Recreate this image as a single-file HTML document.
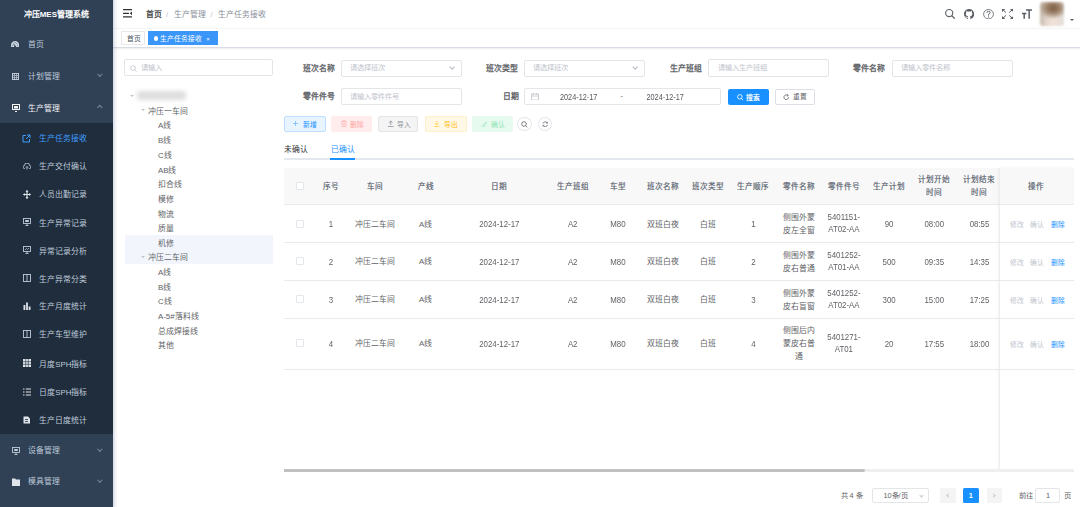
<!DOCTYPE html>
<html lang="zh-CN"><head><meta charset="utf-8">
<style>
*{box-sizing:border-box;margin:0;padding:0}
html,body{width:1080px;height:507px;overflow:hidden;background:#fff;font-family:"Liberation Sans",sans-serif;color:#606266}
.a{position:absolute}
#side{left:0;top:0;width:112.6px;height:507px;background:#304156}
#sub{left:0;top:123px;width:112.6px;height:310.8px;background:#1f2d3d}
.logo{left:0;top:9px;width:112.6px;text-align:center;color:#fff;font-weight:bold;font-size:8px;line-height:12px}
.mi{margin-top:0.6px;left:28.4px;font-size:7.875px;line-height:10px;color:#bfcbd9;white-space:nowrap}
.si{margin-top:0.9px;left:39.3px;font-size:7.875px;line-height:10px;color:#bfcbd9;white-space:nowrap}
.ic{position:absolute}
.chev{position:absolute;width:3.6px;height:3.6px;border-right:0.8px solid #7b8797;border-bottom:0.8px solid #7b8797}
#nav{left:112.6px;top:0;width:967.4px;height:28.1px;background:#fff;box-shadow:0 0.6px 1.5px rgba(0,21,41,.12)}
.bc{top:9.8px;font-size:7.875px;line-height:10px;color:#878e99;white-space:nowrap}
#tags{left:112.6px;top:28.6px;width:967.4px;height:19.4px;background:#fff;border-bottom:1px solid #d8dce5;box-shadow:0 1px 2px rgba(0,0,0,.08)}
.tag{top:2.3px;height:14.6px;line-height:13px;font-size:6.75px;border:1px solid #e6e8ec;color:#495060;padding:0 4.5px;white-space:nowrap}
.t7{font-size:7.875px;line-height:10px;white-space:nowrap}
.inp{position:absolute;border:1px solid #e3e5e8;border-radius:2px;background:#fff}
.ph{position:absolute;font-size:7.3px;line-height:10px;color:#c0c4cc;white-space:nowrap}
.lbl{position:absolute;margin-top:0.8px;font-size:7.875px;line-height:10px;color:#55585e;font-weight:normal;-webkit-text-stroke:0.3px #606266;white-space:nowrap}
.bx{position:absolute;top:116.3px;height:15.5px;border:1px solid;border-radius:2px}
.bt{position:absolute;top:119.5px;font-size:6.75px;line-height:10px;white-space:nowrap}
.btn{position:absolute;top:116.2px;height:15.6px;border:1px solid;border-radius:1.7px;font-size:6.75px;line-height:13.6px;text-align:center;white-space:nowrap}
.tree{position:absolute;margin-top:1.1px;font-size:7.875px;line-height:10px;color:#606266;white-space:nowrap}
.th{position:absolute;font-size:7.6px;line-height:12px;color:#515865;font-weight:normal;-webkit-text-stroke:0.15px #5a6172;text-align:center;white-space:nowrap}
.td{position:absolute;font-size:7.875px;line-height:12.4px;color:#606266;text-align:center;white-space:nowrap}
.hl{position:absolute;left:283.7px;width:790px;height:1px;background:#e8eaed}
.cb{position:absolute;width:7.8px;height:7.8px;border:1px solid #e3e6eb;border-radius:1px;background:#fff}
.ln{transform:scaleY(1.14)}
</style></head><body>
<!-- SIDEBAR -->
<div id="side" class="a"></div>
<div id="sub" class="a"></div>
<div class="a logo">冲压MES管理系统</div>
<!-- main menu items -->
<svg class="ic" style="left:10.9px;top:40.7px" width="8.2" height="6.5" viewBox="0 0 8.2 6.5"><path d="M0 6.5V4.2A4.1 4.2 0 0 1 8.2 4.2V6.5Z" fill="#c9d3df"/><path d="M4.1 5.6L2.6 2.6M1.2 4.3H1.9M6.3 4.3H7M4.1 1V1.8M5.9 2.1L5.4 2.6" stroke="#304156" stroke-width="0.8"/><circle cx="4.1" cy="5.5" r="0.9" fill="#304156"/></svg>
<div class="a mi" style="top:39.5px">首页</div>
<svg class="ic" style="left:12px;top:72.5px" width="7" height="7" viewBox="0 0 7 7"><rect x="0.5" y="0.5" width="6" height="6" fill="none" stroke="#bfcbd9" stroke-width="1"/><path d="M0.5 2.5H6.5M0.5 4.5H6.5M2.5 0.5V6.5M4.5 0.5V6.5" stroke="#bfcbd9" stroke-width="0.7"/></svg>
<div class="a mi" style="top:71.5px">计划管理</div>
<div class="chev" style="left:97.5px;top:71.5px;transform:rotate(45deg)"></div>
<svg class="ic" style="left:11.5px;top:103.5px" width="8" height="8" viewBox="0 0 8 8"><rect x="0.5" y="0.5" width="7" height="5" fill="none" stroke="#f4f4f5" stroke-width="1"/><rect x="2" y="2" width="4" height="2.5" fill="#f4f4f5"/><path d="M3 7.5H5" stroke="#f4f4f5"/></svg>
<div class="a mi" style="top:103px;color:#f4f4f5">生产管理</div>
<div class="chev" style="left:97.5px;top:106px;transform:rotate(-135deg)"></div>
<!-- submenu -->
<svg class="ic" style="left:22.2px;top:134px" width="9" height="9" viewBox="0 0 9 9"><path d="M7.5 5V8H1V1.5H4" fill="none" stroke="#409eff" stroke-width="1"/><path d="M5 1H8V4M8 1L4 5" fill="none" stroke="#409eff" stroke-width="1"/></svg>
<div class="a si" style="top:133.2px;color:#409eff">生产任务接收</div>
<svg class="ic" style="left:23px;top:162.5px" width="8" height="7" viewBox="0 0 8 7"><path d="M2 5.5H1.5A1.5 1.5 0 0 1 1.5 2.5 2.5 2.5 0 0 1 6.5 2.5 1.5 1.5 0 0 1 6.5 5.5H6" fill="none" stroke="#bfcbd9" stroke-width="0.9"/><path d="M4 6.5V3.5M3 4.5L4 3.5 5 4.5" fill="none" stroke="#bfcbd9" stroke-width="0.9"/></svg>
<div class="a si" style="top:161.3px">生产交付确认</div>
<svg class="ic" style="left:22.5px;top:190px" width="8" height="9" viewBox="0 0 8 9"><path d="M4 0.5V8.5M0.5 4.5H7.5" stroke="#dfe4ea" stroke-width="1.2"/><path d="M4 0L2.5 1.8H5.5ZM4 9L2.5 7.2H5.5ZM0 4.5L1.8 3V6ZM8 4.5L6.2 3V6Z" fill="#dfe4ea"/></svg>
<div class="a si" style="top:189.5px">人员出勤记录</div>
<svg class="ic" style="left:23px;top:218px" width="8" height="8" viewBox="0 0 8 8"><rect x="0.5" y="0.5" width="7" height="5" fill="none" stroke="#bfcbd9" stroke-width="0.9"/><rect x="2.2" y="2" width="3.6" height="2" fill="#bfcbd9"/><path d="M4 5.5V7.5M2.5 7.5H5.5" stroke="#bfcbd9" stroke-width="0.9"/></svg>
<div class="a si" style="top:217.7px">生产异常记录</div>
<svg class="ic" style="left:23px;top:246px" width="8" height="8" viewBox="0 0 8 8"><rect x="0.5" y="0.5" width="7" height="5" fill="none" stroke="#bfcbd9" stroke-width="0.9"/><path d="M2 4L3.5 2.5 4.5 3.5 6 2" fill="none" stroke="#bfcbd9" stroke-width="0.8"/><path d="M4 5.5V7.5M2.5 7.5H5.5" stroke="#bfcbd9" stroke-width="0.9"/></svg>
<div class="a si" style="top:245.9px">异常记录分析</div>
<svg class="ic" style="left:23px;top:274px" width="8" height="8" viewBox="0 0 8 8"><rect x="0.5" y="0.5" width="7" height="7" fill="none" stroke="#bfcbd9" stroke-width="0.9"/><path d="M4 0.5V7.5" stroke="#bfcbd9" stroke-width="0.9"/></svg>
<div class="a si" style="top:273.8px">生产异常分类</div>
<svg class="ic" style="left:22.5px;top:302px" width="8" height="8" viewBox="0 0 8 8"><path d="M0.5 8V3H2.3V8ZM3.1 8V0.5H4.9V8ZM5.7 8V4.5H7.5V8Z" fill="#dfe4ea"/></svg>
<div class="a si" style="top:301.5px">生产月度统计</div>
<svg class="ic" style="left:23px;top:330px" width="8" height="8" viewBox="0 0 8 8"><rect x="0.5" y="0.5" width="7" height="7" fill="none" stroke="#bfcbd9" stroke-width="0.9"/><path d="M4 0.5V7.5" stroke="#bfcbd9" stroke-width="0.9"/></svg>
<div class="a si" style="top:329.6px">生产车型维护</div>
<svg class="ic" style="left:22.5px;top:359.3px" width="8" height="8" viewBox="0 0 8 8"><rect x="0" y="0" width="8" height="8" fill="#dfe4ea"/><path d="M0 2.7H8M0 5.3H8M2.7 0V8M5.3 0V8" stroke="#1f2d3d" stroke-width="0.6"/></svg>
<div class="a si" style="top:358.8px">月度SPH指标</div>
<svg class="ic" style="left:22.5px;top:387.5px" width="8" height="8" viewBox="0 0 8 8"><path d="M0 1H1.5M0 4H1.5M0 7H1.5M2.8 1H8M2.8 4H8M2.8 7H8" stroke="#dfe4ea" stroke-width="1.1"/></svg>
<div class="a si" style="top:387.4px">日度SPH指标</div>
<svg class="ic" style="left:22.5px;top:416px" width="8" height="8" viewBox="0 0 8 8"><path d="M0.5 0.5H5L7 2.5V7.5H0.5Z" fill="#dfe4ea"/><path d="M2 3.5H5M2 5.5H5" stroke="#1f2d3d" stroke-width="0.8"/></svg>
<div class="a si" style="top:415.5px">生产日度统计</div>
<svg class="ic" style="left:11.6px;top:447px" width="8" height="8" viewBox="0 0 8 8"><rect x="0.5" y="0.5" width="7" height="5" fill="none" stroke="#bfcbd9" stroke-width="0.9"/><rect x="2.2" y="2" width="3.6" height="2" fill="#bfcbd9"/><path d="M4 5.5V7.5M2.5 7.5H5.5" stroke="#bfcbd9" stroke-width="0.9"/></svg>
<div class="a mi" style="top:445.6px">设备管理</div>
<div class="chev" style="left:97.5px;top:446.5px;transform:rotate(45deg)"></div>
<svg class="ic" style="left:11.6px;top:478px" width="8" height="8" viewBox="0 0 8 8"><path d="M0 0.5H3L4 1.5H8V8H0Z" fill="#dfe4ea"/></svg>
<div class="a mi" style="top:476.9px">模具管理</div>
<div class="chev" style="left:97.5px;top:478px;transform:rotate(45deg)"></div>

<!-- NAVBAR -->
<div id="nav" class="a"></div>
<svg class="ic" style="left:122.7px;top:9.2px" width="9.2" height="8.6" viewBox="0 0 9.2 8.6"><path d="M0 0.7H9.2M0 4.3H6M0 7.9H9.2" stroke="#333" stroke-width="1.2"/><path d="M9.2 2.3V6.3L6.8 4.3Z" fill="#333"/></svg>
<div class="a bc" style="left:146.3px;color:#3a3c40;-webkit-text-stroke:0.25px #3a3c40">首页</div>
<div class="a bc" style="left:166px;color:#c0c4cc">/</div>
<div class="a bc" style="left:173.8px">生产管理</div>
<div class="a bc" style="left:210.5px;color:#c0c4cc">/</div>
<div class="a bc" style="left:218px">生产任务接收</div>
<!-- right icons -->
<svg class="ic" style="left:944px;top:8px" width="12" height="12" viewBox="0 0 12 12"><circle cx="5.2" cy="5.1" r="3.6" fill="none" stroke="#5a5e66" stroke-width="1.1"/><path d="M7.8 7.7L10.8 10.6" stroke="#5a5e66" stroke-width="1.3"/></svg>
<svg class="ic" style="left:964px;top:9px" width="10.2" height="10.2" viewBox="0 0 16 16"><path fill="#5a5e66" d="M8 0C3.58 0 0 3.58 0 8c0 3.54 2.29 6.53 5.47 7.59.4.07.55-.17.55-.38 0-.19-.01-.82-.01-1.49-2.01.37-2.530-.49-2.69-.94-.09-.23-.48-.94-.82-1.13-.28-.15-.68-.52-.01-.53.63-.01 1.08.58 1.23.82.72 1.21 1.87.87 2.33.66.07-.52.28-.87.51-1.07-1.780-.2-3.640-.89-3.640-3.95 0-.87.31-1.59.82-2.15-.08-.2-.36-1.02.08-2.12 0 0 .67-.21 2.2.82.64-.18 1.32-.27 2-.27.68 0 1.36.09 2 .27 1.53-1.04 2.2-.82 2.2-.82.44 1.1.16 1.92.08 2.12.51.56.82 1.27.82 2.15 0 3.07-1.87 3.75-3.65 3.95.29.25.54.73.54 1.48 0 1.07-.01 1.93-.01 2.2 0 .21.15.46.55.38A8.013 8.013 0 0016 8c0-4.42-3.58-8-8-8z"/></svg>
<svg class="ic" style="left:983px;top:8.8px" width="11" height="10.4" viewBox="0 0 11 10.4"><ellipse cx="5.5" cy="5.2" rx="4.9" ry="4.7" fill="none" stroke="#5a5e66" stroke-width="0.8"/><path d="M3.9 3.9Q3.9 2.3 5.5 2.3Q7.1 2.3 7.1 3.7Q7.1 4.6 5.6 5.3V6.6" fill="none" stroke="#5a5e66" stroke-width="1"/><circle cx="5.6" cy="7.9" r="0.6" fill="#5a5e66"/></svg>
<svg class="ic" style="left:1002px;top:9px" width="11.2" height="10" viewBox="0 0 11.2 10"><path d="M1.2 1.1L4 3.6M10 1.1L7.2 3.6M1.2 8.9L4 6.4M10 8.9L7.2 6.4" stroke="#5a5e66" stroke-width="1"/><path d="M0 0H3.3L0 3ZM11.2 0H7.9L11.2 3ZM0 10H3.3L0 7ZM11.2 10H7.9L11.2 7Z" fill="#5a5e66"/></svg>
<svg class="ic" style="left:1021.6px;top:9.2px" width="10.3" height="9.8" viewBox="0 0 10.3 9.8"><path d="M4 1H10.3M7.15 1V9.8M0 4.4H4.4M2.2 4.4V9.8" stroke="#5a5e66" stroke-width="1.5"/></svg>
<div class="a" style="left:1039.7px;top:2px;width:24.2px;height:23.5px;border-radius:3px;background:radial-gradient(ellipse 60% 45% at 55% 25%,#7a5c44 0%,#9c8068 45%,rgba(200,185,170,0) 100%),radial-gradient(ellipse 50% 40% at 55% 85%,#f3e3da 0%,rgba(240,225,215,0) 100%),linear-gradient(90deg,#cbbfb3,#e0d6cd 50%,#e4e0dc);filter:blur(1.3px)"></div>
<div class="a" style="left:1069.8px;top:19px;width:0;height:0;border-left:2px solid transparent;border-right:2px solid transparent;border-top:2.5px solid #5a5e66"></div>

<!-- TAGS -->
<div id="tags" class="a"></div>
<div class="a tag" style="left:121px;top:30.5px;width:23.7px">首页</div>
<div class="a tag" style="left:148px;top:30.5px;width:69.5px;background:#3a96f8;border-color:#3a96f8;color:#fff;padding-left:4.5px">
<span style="display:inline-block;width:4.5px;height:4.5px;border-radius:50%;background:#fff;margin-right:2.3px;vertical-align:0px"></span>生产任务接收<span style="margin-left:4px;font-size:6px">×</span></div>

<!-- TREE -->
<div class="inp" style="left:124.3px;top:59.4px;width:148.4px;height:17px"></div>
<svg class="ic" style="left:130px;top:64.5px" width="7" height="7" viewBox="0 0 7 7"><circle cx="3" cy="3" r="2.4" fill="none" stroke="#c0c4cc" stroke-width="0.8"/><path d="M4.8 4.8L6.5 6.5" stroke="#c0c4cc" stroke-width="0.8"/></svg>
<div class="ph" style="left:141px;top:63px">请输入</div>
<div class="a" style="left:124.5px;top:235.3px;width:148.8px;height:28.7px;background:#f2f6fc"></div>
<div class="a" style="left:129.5px;top:94.6px;width:0;height:0;border-left:2px solid transparent;border-right:2px solid transparent;border-top:2.5px solid #c0c4cc"></div>
<div class="a" style="left:136.5px;top:91px;width:49px;height:9px;background:#dedede;border-radius:3px;filter:blur(2px)"></div>
<div class="a" style="left:140.5px;top:109.4px;width:0;height:0;border-left:2px solid transparent;border-right:2px solid transparent;border-top:2.5px solid #c0c4cc"></div>
<div class="tree" style="left:148px;top:105.5px">冲压一车间</div>
<div class="tree" style="left:158px;top:120.4px">A线</div>
<div class="tree" style="left:158px;top:135.1px">B线</div>
<div class="tree" style="left:158px;top:149.8px">C线</div>
<div class="tree" style="left:158px;top:164.5px">AB线</div>
<div class="tree" style="left:158px;top:179.2px">扣合线</div>
<div class="tree" style="left:158px;top:193.9px">模修</div>
<div class="tree" style="left:158px;top:208.6px">物流</div>
<div class="tree" style="left:158px;top:223.3px">质量</div>
<div class="tree" style="left:158px;top:238px">机修</div>
<div class="a" style="left:140.5px;top:255.9px;width:0;height:0;border-left:2px solid transparent;border-right:2px solid transparent;border-top:2.5px solid #c0c4cc"></div>
<div class="tree" style="left:148px;top:252.2px">冲压二车间</div>
<div class="tree" style="left:158px;top:266.9px">A线</div>
<div class="tree" style="left:158px;top:281.6px">B线</div>
<div class="tree" style="left:158px;top:296.3px">C线</div>
<div class="tree" style="left:158px;top:311px">A-5#落料线</div>
<div class="tree" style="left:158px;top:325.7px">总成焊接线</div>
<div class="tree" style="left:158px;top:340.4px">其他</div>

<!-- FORM -->
<div class="lbl" style="left:302.5px;top:63px">班次名称</div>
<div class="inp" style="left:341.3px;top:59.7px;width:120.4px;height:17.4px"></div>
<div class="ph" style="left:350px;top:63.3px">请选择班次</div>
<div class="chev" style="left:450px;top:64.6px;transform:rotate(45deg);border-color:#b4b8bf;width:4.4px;height:4.4px"></div>
<div class="lbl" style="left:486.3px;top:63px">班次类型</div>
<div class="inp" style="left:524.2px;top:59.7px;width:121.1px;height:17.4px"></div>
<div class="ph" style="left:533px;top:63.3px">请选择班次</div>
<div class="chev" style="left:633.3px;top:64.6px;transform:rotate(45deg);border-color:#b4b8bf;width:4.4px;height:4.4px"></div>
<div class="lbl" style="left:669.6px;top:63px">生产班组</div>
<div class="inp" style="left:708px;top:59.4px;width:121.3px;height:17.8px"></div>
<div class="ph" style="left:717.5px;top:63.3px">请输入生产班组</div>
<div class="lbl" style="left:853.3px;top:63px">零件名称</div>
<div class="inp" style="left:892.2px;top:59.5px;width:120.5px;height:17.8px"></div>
<div class="ph" style="left:901px;top:63.3px">请输入零件名称</div>

<div class="lbl" style="left:302.5px;top:91.7px">零件件号</div>
<div class="inp" style="left:341.3px;top:88.3px;width:120.4px;height:17px"></div>
<div class="ph" style="left:350px;top:91.8px">请输入零件件号</div>
<div class="lbl" style="left:502.5px;top:91.7px">日期</div>
<div class="inp" style="left:524.2px;top:87.5px;width:197.3px;height:17.9px"></div>
<svg class="ic" style="left:530.8px;top:92.5px" width="8" height="7.5" viewBox="0 0 8 7.5"><rect x="0.5" y="1" width="7" height="6" fill="none" stroke="#c0c4cc" stroke-width="0.8"/><path d="M0.5 3H7.5M2.5 0V1.8M5.5 0V1.8" stroke="#c0c4cc" stroke-width="0.8"/></svg>
<div class="a ln" style="left:560px;top:93px;font-size:7.3px;line-height:10px;color:#55575c">2024-12-17</div>
<div class="a" style="left:620.5px;top:91px;font-size:7.3px;line-height:10px;color:#606266">-</div>
<div class="a ln" style="left:646.5px;top:93px;font-size:7.3px;line-height:10px;color:#55575c">2024-12-17</div>
<div class="a" style="left:728px;top:89.3px;width:41px;height:15.7px;background:#1890ff;border-radius:2px"></div>
<svg class="ic" style="left:736.6px;top:94.2px" width="6.6" height="6.6" viewBox="0 0 7 7"><circle cx="3" cy="3" r="2.4" fill="none" stroke="#fff" stroke-width="0.9"/><path d="M4.8 4.8L6.5 6.5" stroke="#fff" stroke-width="0.9"/></svg>
<div class="a" style="left:746.4px;top:92.6px;font-size:6.75px;line-height:10px;color:#fff;-webkit-text-stroke:0.2px #fff">搜索</div>
<div class="a" style="left:775.2px;top:89.3px;width:40.2px;height:15.7px;background:#fff;border:1px solid #dcdfe6;border-radius:2px"></div>
<svg class="ic" style="left:783px;top:93.7px" width="6.5" height="6.5" viewBox="0 0 7 7"><path d="M6 3.5A2.5 2.5 0 1 1 5 1.5" fill="none" stroke="#606266" stroke-width="0.9"/><path d="M4.3 0.2L5.8 1.6 4.2 2.6" fill="none" stroke="#606266" stroke-width="0.8"/></svg>
<div class="a" style="left:792.5px;top:92px;font-size:6.75px;line-height:10px;color:#606266">重置</div>

<!-- TOOLBAR -->
<div class="bx" style="left:284.2px;width:41.4px;background:#e8f4ff;border-color:#bcdfff"></div>
<svg class="ic" style="left:293.4px;top:121.3px" width="5" height="5" viewBox="0 0 5 5"><path d="M2.5 0V5M0 2.5H5" stroke="#7dbcf5" stroke-width="0.8"/></svg>
<div class="bt" style="left:303.2px;color:#1890ff">新增</div>
<div class="bx" style="left:331.1px;width:40.8px;background:#ffeded;border-color:#ffeded"></div>
<svg class="ic" style="left:340.7px;top:120.3px" width="6" height="7" viewBox="0 0 6 7"><path d="M0.3 1.5H5.7M2 1.5V0.5H4V1.5M1 1.5V6.5H5V1.5M2.3 3V5.3M3.7 3V5.3" fill="none" stroke="#ffb3b3" stroke-width="0.7"/></svg>
<div class="bt" style="left:350.2px;color:#ffa1a1">删除</div>
<div class="bx" style="left:378px;width:39.8px;background:#f4f4f5;border-color:#e3e4e6"></div>
<svg class="ic" style="left:388px;top:120.3px" width="5.5" height="7" viewBox="0 0 5.5 7"><path d="M2.75 1V5M1 2.7L2.75 1 4.5 2.7M0 6.5H5.5" fill="none" stroke="#909399" stroke-width="0.8"/></svg>
<div class="bt" style="left:396.8px;color:#909399">导入</div>
<div class="bx" style="left:424.8px;width:42px;background:#fff8e6;border-color:#fff0c8"></div>
<svg class="ic" style="left:434.3px;top:120.3px" width="5.5" height="7" viewBox="0 0 5.5 7"><path d="M2.75 1V5M1 3.3L2.75 5 4.5 3.3M0 6.5H5.5" fill="none" stroke="#ffcf4d" stroke-width="0.8"/></svg>
<div class="bt" style="left:443.9px;color:#ffc21a">导出</div>
<div class="bx" style="left:472.2px;width:40.5px;background:#e7faf0;border-color:#e7faf0"></div>
<svg class="ic" style="left:481.7px;top:120.5px" width="5.5" height="6.5" viewBox="0 0 5.5 6.5"><path d="M0.5 6L1 4.3 4.2 1 5 1.8 1.8 5ZM0 6.3H5.5" fill="none" stroke="#9be7bb" stroke-width="0.7"/></svg>
<div class="bt" style="left:491px;color:#8fe3b4">确认</div>
<div class="a" style="left:517.2px;top:116.6px;width:14.6px;height:14.8px;border:1px solid #e4e7ed;border-radius:50%;background:#fff"></div>
<svg class="ic" style="left:521.2px;top:120.8px" width="7" height="7" viewBox="0 0 7 7"><circle cx="3" cy="3" r="2.3" fill="none" stroke="#606266" stroke-width="0.8"/><path d="M4.7 4.7L6.3 6.3" stroke="#606266" stroke-width="0.8"/></svg>
<div class="a" style="left:537.6px;top:116.6px;width:14.6px;height:14.8px;border:1px solid #e4e7ed;border-radius:50%;background:#fff"></div>
<svg class="ic" style="left:541.8px;top:120.6px" width="6.5" height="6.5" viewBox="0 0 7 7"><path d="M1 2.8A2.6 2.6 0 0 1 5.8 2.2M6 4.2A2.6 2.6 0 0 1 1.2 4.8" fill="none" stroke="#606266" stroke-width="0.8"/><path d="M5.9 0.8V2.4H4.4M1.1 6.2V4.6H2.6" fill="none" stroke="#606266" stroke-width="0.7"/></svg>

<!-- TABS -->
<div class="a t7" style="left:283.9px;top:144.5px;color:#303133;font-size:7.875px">未确认</div>
<div class="a t7" style="left:330.5px;top:144.5px;color:#1890ff;font-size:7.875px">已确认</div>
<div class="a" style="left:283.7px;top:158.4px;width:790px;height:1.2px;background:#e4e7ed"></div>
<div class="a" style="left:330.4px;top:158.1px;width:24.4px;height:1.8px;background:#1890ff"></div>

<!-- TABLE -->
<div class="a" style="left:283.7px;top:167.5px;width:790px;height:37.3px;background:#f8f8f9"></div>
<div class="hl" style="top:204.3px"></div>
<div class="hl" style="top:241.8px"></div>
<div class="hl" style="top:279.6px"></div>
<div class="hl" style="top:317.8px"></div>
<div class="hl" style="top:368.8px"></div>
<!--TBL-->
<div class="cb" style="left:296.20px;top:181.80px"></div>
<div class="th" style="left:314.90px;width:32.20px;top:180.85px;line-height:12.9px">序号</div>
<div class="th" style="left:347.10px;width:55.80px;top:180.85px;line-height:12.9px">车间</div>
<div class="th" style="left:402.90px;width:45.60px;top:180.85px;line-height:12.9px">产线</div>
<div class="th" style="left:448.50px;width:101.60px;top:180.85px;line-height:12.9px">日期</div>
<div class="th" style="left:550.10px;width:45.20px;top:180.85px;line-height:12.9px">生产班组</div>
<div class="th" style="left:595.30px;width:45.20px;top:180.85px;line-height:12.9px">车型</div>
<div class="th" style="left:640.50px;width:45.20px;top:180.85px;line-height:12.9px">班次名称</div>
<div class="th" style="left:685.70px;width:45.20px;top:180.85px;line-height:12.9px">班次类型</div>
<div class="th" style="left:730.90px;width:45.20px;top:180.85px;line-height:12.9px">生产顺序</div>
<div class="th" style="left:776.10px;width:45.20px;top:180.85px;line-height:12.9px">零件名称</div>
<div class="th" style="left:821.30px;width:45.20px;top:180.85px;line-height:12.9px">零件件号</div>
<div class="th" style="left:866.50px;width:45.20px;top:180.85px;line-height:12.9px">生产计划</div>
<div class="th" style="left:911.70px;width:45.20px;top:174.40px;line-height:12.9px">计划开始<br>时间</div>
<div class="th" style="left:956.90px;width:45.20px;top:174.40px;line-height:12.9px">计划结束<br>时间</div>
<div class="cb" style="left:296.20px;top:219.80px"></div>
<div class="td ln" style="left:314.90px;width:32.20px;top:219.04px;line-height:11.32px">1</div>
<div class="td" style="left:347.10px;width:55.80px;top:218.55px;line-height:12.90px">冲压二车间</div>
<div class="td" style="left:402.90px;width:45.60px;top:218.55px;line-height:12.90px">A线</div>
<div class="td ln" style="left:448.50px;width:101.60px;top:219.04px;line-height:11.32px">2024-12-17</div>
<div class="td ln" style="left:550.10px;width:45.20px;top:219.04px;line-height:11.32px">A2</div>
<div class="td ln" style="left:595.30px;width:45.20px;top:219.04px;line-height:11.32px">M80</div>
<div class="td" style="left:640.50px;width:45.20px;top:218.55px;line-height:12.90px">双班白夜</div>
<div class="td" style="left:685.70px;width:45.20px;top:218.55px;line-height:12.90px">白班</div>
<div class="td ln" style="left:730.90px;width:45.20px;top:219.04px;line-height:11.32px">1</div>
<div class="td" style="left:776.10px;width:45.20px;top:212.10px;line-height:12.90px">侧围外蒙<br>皮左全窗</div>
<div class="td ln" style="left:821.30px;width:45.20px;top:212.38px;line-height:11.32px">5401151-<br>AT02-AA</div>
<div class="td ln" style="left:866.50px;width:45.20px;top:219.04px;line-height:11.32px">90</div>
<div class="td ln" style="left:911.70px;width:45.20px;top:219.04px;line-height:11.32px">08:00</div>
<div class="td ln" style="left:956.90px;width:45.20px;top:219.04px;line-height:11.32px">08:55</div>
<div class="cb" style="left:296.20px;top:257.30px"></div>
<div class="td ln" style="left:314.90px;width:32.20px;top:256.54px;line-height:11.32px">2</div>
<div class="td" style="left:347.10px;width:55.80px;top:256.05px;line-height:12.90px">冲压二车间</div>
<div class="td" style="left:402.90px;width:45.60px;top:256.05px;line-height:12.90px">A线</div>
<div class="td ln" style="left:448.50px;width:101.60px;top:256.54px;line-height:11.32px">2024-12-17</div>
<div class="td ln" style="left:550.10px;width:45.20px;top:256.54px;line-height:11.32px">A2</div>
<div class="td ln" style="left:595.30px;width:45.20px;top:256.54px;line-height:11.32px">M80</div>
<div class="td" style="left:640.50px;width:45.20px;top:256.05px;line-height:12.90px">双班白夜</div>
<div class="td" style="left:685.70px;width:45.20px;top:256.05px;line-height:12.90px">白班</div>
<div class="td ln" style="left:730.90px;width:45.20px;top:256.54px;line-height:11.32px">2</div>
<div class="td" style="left:776.10px;width:45.20px;top:249.60px;line-height:12.90px">侧围外蒙<br>皮右普通</div>
<div class="td ln" style="left:821.30px;width:45.20px;top:249.88px;line-height:11.32px">5401252-<br>AT01-AA</div>
<div class="td ln" style="left:866.50px;width:45.20px;top:256.54px;line-height:11.32px">500</div>
<div class="td ln" style="left:911.70px;width:45.20px;top:256.54px;line-height:11.32px">09:35</div>
<div class="td ln" style="left:956.90px;width:45.20px;top:256.54px;line-height:11.32px">14:35</div>
<div class="cb" style="left:296.20px;top:295.40px"></div>
<div class="td ln" style="left:314.90px;width:32.20px;top:294.64px;line-height:11.32px">3</div>
<div class="td" style="left:347.10px;width:55.80px;top:294.15px;line-height:12.90px">冲压二车间</div>
<div class="td" style="left:402.90px;width:45.60px;top:294.15px;line-height:12.90px">A线</div>
<div class="td ln" style="left:448.50px;width:101.60px;top:294.64px;line-height:11.32px">2024-12-17</div>
<div class="td ln" style="left:550.10px;width:45.20px;top:294.64px;line-height:11.32px">A2</div>
<div class="td ln" style="left:595.30px;width:45.20px;top:294.64px;line-height:11.32px">M80</div>
<div class="td" style="left:640.50px;width:45.20px;top:294.15px;line-height:12.90px">双班白夜</div>
<div class="td" style="left:685.70px;width:45.20px;top:294.15px;line-height:12.90px">白班</div>
<div class="td ln" style="left:730.90px;width:45.20px;top:294.64px;line-height:11.32px">3</div>
<div class="td" style="left:776.10px;width:45.20px;top:287.70px;line-height:12.90px">侧围外蒙<br>皮右盲窗</div>
<div class="td ln" style="left:821.30px;width:45.20px;top:287.98px;line-height:11.32px">5401252-<br>AT02-AA</div>
<div class="td ln" style="left:866.50px;width:45.20px;top:294.64px;line-height:11.32px">300</div>
<div class="td ln" style="left:911.70px;width:45.20px;top:294.64px;line-height:11.32px">15:00</div>
<div class="td ln" style="left:956.90px;width:45.20px;top:294.64px;line-height:11.32px">17:25</div>
<div class="cb" style="left:296.20px;top:339.40px"></div>
<div class="td ln" style="left:314.90px;width:32.20px;top:338.64px;line-height:11.32px">4</div>
<div class="td" style="left:347.10px;width:55.80px;top:338.15px;line-height:12.90px">冲压二车间</div>
<div class="td" style="left:402.90px;width:45.60px;top:338.15px;line-height:12.90px">A线</div>
<div class="td ln" style="left:448.50px;width:101.60px;top:338.64px;line-height:11.32px">2024-12-17</div>
<div class="td ln" style="left:550.10px;width:45.20px;top:338.64px;line-height:11.32px">A2</div>
<div class="td ln" style="left:595.30px;width:45.20px;top:338.64px;line-height:11.32px">M80</div>
<div class="td" style="left:640.50px;width:45.20px;top:338.15px;line-height:12.90px">双班白夜</div>
<div class="td" style="left:685.70px;width:45.20px;top:338.15px;line-height:12.90px">白班</div>
<div class="td ln" style="left:730.90px;width:45.20px;top:338.64px;line-height:11.32px">4</div>
<div class="td" style="left:776.10px;width:45.20px;top:325.25px;line-height:12.90px">侧围后内<br>蒙皮右普<br>通</div>
<div class="td ln" style="left:821.30px;width:45.20px;top:331.98px;line-height:11.32px">5401271-<br>AT01</div>
<div class="td ln" style="left:866.50px;width:45.20px;top:338.64px;line-height:11.32px">20</div>
<div class="td ln" style="left:911.70px;width:45.20px;top:338.64px;line-height:11.32px">17:55</div>
<div class="td ln" style="left:956.90px;width:45.20px;top:338.64px;line-height:11.32px">18:00</div>
<div class="a" style="left:999.2px;top:167.5px;width:74.5px;height:302px;background:#fff;box-shadow:-1.5px 0 3px rgba(0,0,0,.06)"></div>
<div class="a" style="left:999.2px;top:167.5px;width:74.5px;height:37.3px;background:#f8f8f9"></div>
<div class="a" style="left:998.6px;top:167.5px;width:1px;height:302px;background:#ededed"></div>
<div class="a" style="left:999.2px;top:204.3px;width:74.5px;height:1px;background:#e8eaed"></div>
<div class="a" style="left:999.2px;top:241.8px;width:74.5px;height:1px;background:#e8eaed"></div>
<div class="a" style="left:999.2px;top:279.6px;width:74.5px;height:1px;background:#e8eaed"></div>
<div class="a" style="left:999.2px;top:317.8px;width:74.5px;height:1px;background:#e8eaed"></div>
<div class="a" style="left:999.2px;top:368.8px;width:74.5px;height:1px;background:#e8eaed"></div>
<div class="th" style="left:999.2px;width:74.5px;top:180.85px;line-height:12.9px">操作</div>
<div class="a" style="left:1009.8px;top:220.00px;font-size:6.75px;line-height:10px;white-space:nowrap;color:#c0c4cc">修改</div>
<div class="a" style="left:1030.2px;top:220.00px;font-size:6.75px;line-height:10px;white-space:nowrap;color:#c0c4cc">确认</div>
<div class="a" style="left:1050.5px;top:220.00px;font-size:6.75px;line-height:10px;white-space:nowrap;color:#1890ff">删除</div>
<div class="a" style="left:1009.8px;top:257.50px;font-size:6.75px;line-height:10px;white-space:nowrap;color:#c0c4cc">修改</div>
<div class="a" style="left:1030.2px;top:257.50px;font-size:6.75px;line-height:10px;white-space:nowrap;color:#c0c4cc">确认</div>
<div class="a" style="left:1050.5px;top:257.50px;font-size:6.75px;line-height:10px;white-space:nowrap;color:#1890ff">删除</div>
<div class="a" style="left:1009.8px;top:295.60px;font-size:6.75px;line-height:10px;white-space:nowrap;color:#c0c4cc">修改</div>
<div class="a" style="left:1030.2px;top:295.60px;font-size:6.75px;line-height:10px;white-space:nowrap;color:#c0c4cc">确认</div>
<div class="a" style="left:1050.5px;top:295.60px;font-size:6.75px;line-height:10px;white-space:nowrap;color:#1890ff">删除</div>
<div class="a" style="left:1009.8px;top:339.60px;font-size:6.75px;line-height:10px;white-space:nowrap;color:#c0c4cc">修改</div>
<div class="a" style="left:1030.2px;top:339.60px;font-size:6.75px;line-height:10px;white-space:nowrap;color:#c0c4cc">确认</div>
<div class="a" style="left:1050.5px;top:339.60px;font-size:6.75px;line-height:10px;white-space:nowrap;color:#1890ff">删除</div>
<div class="a" style="left:283.7px;top:469.2px;width:790px;height:2.8px;background:#efefef"></div>
<div class="a" style="left:283.9px;top:469.2px;width:580.7px;height:2.8px;background:#c1c1c1;border-radius:0 1.4px 1.4px 0"></div>
<div class="a" style="left:840.6px;top:490.5px;font-size:7.3px;line-height:10px;color:#606266;white-space:nowrap">共 4 条</div>
<div class="inp" style="left:872.1px;top:488.2px;width:56.6px;height:15px"></div>
<div class="a" style="left:883.5px;top:490.5px;font-size:7.3px;line-height:10px;color:#606266;white-space:nowrap">10条/页</div>
<div class="chev" style="left:920.3px;top:493.6px;transform:rotate(45deg);border-color:#c0c4cc;width:3px;height:3px"></div>
<div class="a" style="left:940.1px;top:488.2px;width:16.3px;height:15px;background:#f4f4f5;border-radius:1.5px"></div>
<div class="chev" style="left:947px;top:494px;transform:rotate(135deg);border-color:#c0c4cc;width:3px;height:3px"></div>
<div class="a" style="left:962.6px;top:487.9px;width:16.5px;height:15.6px;background:#1890ff;border-radius:1.5px;color:#fff;font-size:7.3px;line-height:15.6px;text-align:center;font-weight:bold">1</div>
<div class="a" style="left:986.7px;top:488.2px;width:15px;height:15px;background:#f4f4f5;border-radius:1.5px"></div>
<div class="chev" style="left:991.8px;top:494px;transform:rotate(-45deg);border-color:#c0c4cc;width:3px;height:3px"></div>
<div class="a" style="left:1018.6px;top:490.5px;font-size:7.3px;line-height:10px;color:#606266;white-space:nowrap">前往</div>
<div class="inp" style="left:1035.4px;top:488.2px;width:25.1px;height:15px;font-size:7.3px;line-height:13px;text-align:center;color:#606266">1</div>
<div class="a" style="left:1063.7px;top:490.5px;font-size:7.3px;line-height:10px;color:#606266;white-space:nowrap">页</div>
<!--/TBL-->
<div class="a" style="left:112.6px;top:0;width:5.5px;height:507px;background:linear-gradient(90deg,rgba(40,70,110,.2),rgba(40,70,110,.07) 45%,rgba(40,70,110,0))"></div>
</body></html>
